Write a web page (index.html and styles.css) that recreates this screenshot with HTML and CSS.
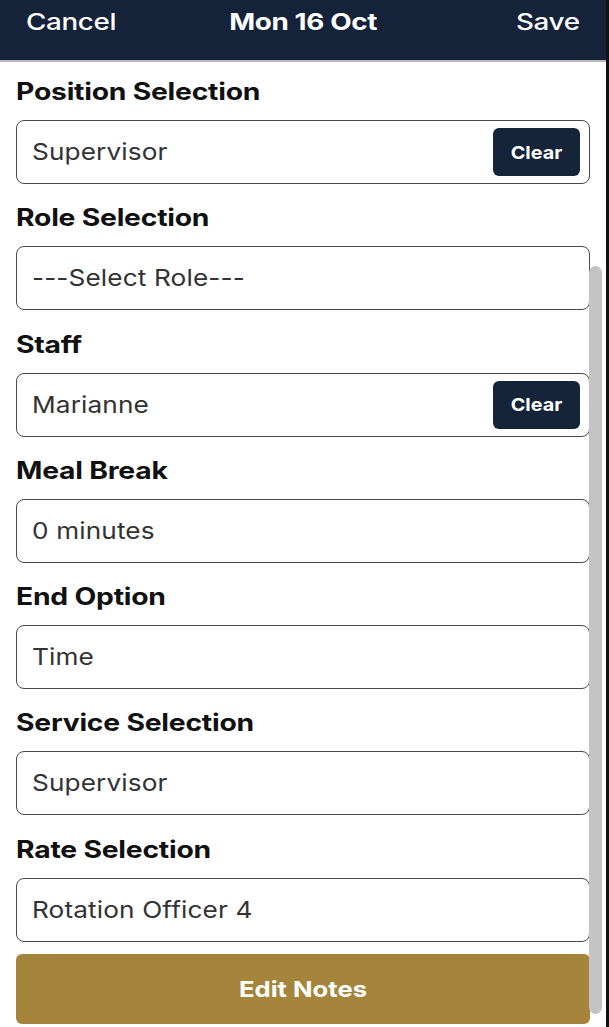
FILE: index.html
```html
<!DOCTYPE html>
<html>
<head>
<meta charset="utf-8">
<link rel="stylesheet" href="styles.css">
</head>
<body>
<div class="app">
  <header class="topbar">
    <span class="tb-side tb-left"><span class="wide wl">Cancel</span></span>
    <span class="tb-title"><span class="wide wc">Mon 16 Oct</span></span>
    <span class="tb-side tb-right"><span class="wide wr">Save</span></span>
  </header>
  <main class="form">
    <div class="field">
      <div class="label"><span class="wide wl">Position Selection</span></div>
      <div class="box"><span class="value wide wl">Supervisor</span><span class="clear"><span class="wide wc">Clear</span></span></div>
    </div>
    <div class="field">
      <div class="label"><span class="wide wl">Role Selection</span></div>
      <div class="box"><span class="value wide wl">---Select Role---</span></div>
    </div>
    <div class="field">
      <div class="label"><span class="wide wl">Staff</span></div>
      <div class="box"><span class="value wide wl">Marianne</span><span class="clear"><span class="wide wc">Clear</span></span></div>
    </div>
    <div class="field">
      <div class="label"><span class="wide wl">Meal Break</span></div>
      <div class="box"><span class="value wide wl">0 minutes</span></div>
    </div>
    <div class="field">
      <div class="label"><span class="wide wl">End Option</span></div>
      <div class="box"><span class="value wide wl">Time</span></div>
    </div>
    <div class="field">
      <div class="label"><span class="wide wl">Service Selection</span></div>
      <div class="box"><span class="value wide wl">Supervisor</span></div>
    </div>
    <div class="field field-last">
      <div class="label"><span class="wide wl">Rate Selection</span></div>
      <div class="box"><span class="value wide wl">Rotation Officer 4</span></div>
    </div>
    <div class="notes"><span class="wide wc">Edit Notes</span></div>
  </main>
  <div class="scroll-thumb"></div>
  <div class="edge"></div>
</div>
</body>
</html>
```
FILE: styles.css
```css
* { box-sizing: border-box; }
html, body { margin: 0; padding: 0; background: #fff; }
body { font-family: Inter, "Liberation Sans", sans-serif; color: #111; }
.app { position: relative; width: 609px; height: 1027px; overflow: hidden; }
.wide { display: inline-block; transform: scaleX(1.18); white-space: nowrap; }
.wl { transform-origin: left center; }
.wc { transform-origin: center center; }
.wr { transform-origin: right center; }
.topbar {
  background: #14223a;
  color: #fff;
  display: grid;
  grid-template-columns: 1fr auto 1fr;
  align-items: start;
  padding: 8px 29px 0 26px;
  border-bottom: 2px solid #b8b8b8;
  box-sizing: content-box;
  height: 52px;
}
.tb-left { justify-self: start; }
.tb-right { justify-self: end; }
.tb-side { font-size: 23px; font-weight: 500; letter-spacing: -0.3px; }
.tb-title { font-size: 23px; font-weight: 700; letter-spacing: -0.3px; }
.topbar .wide { transform: scaleX(1.21); }
.form { padding: 15px 19px 0 16px; display: flex; flex-direction: column; }
.field { display: flex; flex-direction: column; margin-bottom: 19.3px; }
.field-last { margin-bottom: 12px; }
.label { font-size: 24px; font-weight: 700; line-height: 30px; margin-bottom: 13px; letter-spacing: -0.2px; color: #111; }
.box {
  height: 64px;
  border: 1.3px solid #4a4a4a;
  border-radius: 8px;
  display: flex;
  align-items: center;
  justify-content: space-between;
  padding: 0 9px 0 15px;
}
.value { font-size: 23px; color: #333; letter-spacing: 0.1px; }
.box .value { transform: scaleX(1.14); }
.clear {
  background: #16243a;
  color: #fff;
  font-size: 18px;
  font-weight: 700;
  width: 87px;
  height: 48px;
  border-radius: 6px;
  display: flex;
  align-items: center;
  justify-content: center;
}
.clear .wide { transform: scaleX(1.1); }
.notes {
  height: 70px;
  background: #a5843c;
  border-radius: 6px;
  color: #fff;
  font-size: 22px;
  font-weight: 700;
  display: flex;
  align-items: center;
  justify-content: center;
}
.notes .wide { transform: scaleX(1.165); }
.scroll-thumb {
  position: absolute;
  left: 589px;
  top: 266px;
  width: 13px;
  height: 748px;
  background: #c4c4c4;
  border-radius: 7px;
}
.edge { position: absolute; right: 0; top: 0; width: 3px; bottom: 0; background: #111; }
```
